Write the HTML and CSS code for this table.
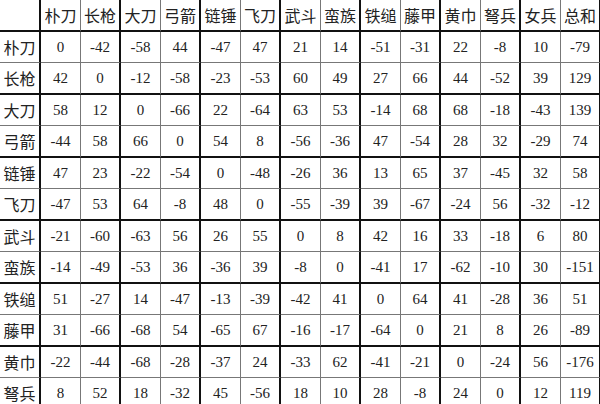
FILE: index.html
```html
<!DOCTYPE html>
<html lang="zh">
<head>
<meta charset="utf-8">
<title>兵种对战表</title>
<link rel="stylesheet" href="styles.css">
</head>
<body>
<div class="sheet">
  <div class="row"><div class="cell"></div><div class="cell">朴刀</div><div class="cell">长枪</div><div class="cell">大刀</div><div class="cell">弓箭</div><div class="cell">链锤</div><div class="cell">飞刀</div><div class="cell">武斗</div><div class="cell">蛮族</div><div class="cell">铁缒</div><div class="cell">藤甲</div><div class="cell">黄巾</div><div class="cell">弩兵</div><div class="cell">女兵</div><div class="cell">总和</div></div>
  <div class="row"><div class="cell">朴刀</div><div class="cell num">0</div><div class="cell num">-42</div><div class="cell num">-58</div><div class="cell num">44</div><div class="cell num">-47</div><div class="cell num">47</div><div class="cell num">21</div><div class="cell num">14</div><div class="cell num">-51</div><div class="cell num">-31</div><div class="cell num">22</div><div class="cell num">-8</div><div class="cell num">10</div><div class="cell num">-79</div></div>
  <div class="row"><div class="cell">长枪</div><div class="cell num">42</div><div class="cell num">0</div><div class="cell num">-12</div><div class="cell num">-58</div><div class="cell num">-23</div><div class="cell num">-53</div><div class="cell num">60</div><div class="cell num">49</div><div class="cell num">27</div><div class="cell num">66</div><div class="cell num">44</div><div class="cell num">-52</div><div class="cell num">39</div><div class="cell num">129</div></div>
  <div class="row"><div class="cell">大刀</div><div class="cell num">58</div><div class="cell num">12</div><div class="cell num">0</div><div class="cell num">-66</div><div class="cell num">22</div><div class="cell num">-64</div><div class="cell num">63</div><div class="cell num">53</div><div class="cell num">-14</div><div class="cell num">68</div><div class="cell num">68</div><div class="cell num">-18</div><div class="cell num">-43</div><div class="cell num">139</div></div>
  <div class="row"><div class="cell">弓箭</div><div class="cell num">-44</div><div class="cell num">58</div><div class="cell num">66</div><div class="cell num">0</div><div class="cell num">54</div><div class="cell num">8</div><div class="cell num">-56</div><div class="cell num">-36</div><div class="cell num">47</div><div class="cell num">-54</div><div class="cell num">28</div><div class="cell num">32</div><div class="cell num">-29</div><div class="cell num">74</div></div>
  <div class="row"><div class="cell">链锤</div><div class="cell num">47</div><div class="cell num">23</div><div class="cell num">-22</div><div class="cell num">-54</div><div class="cell num">0</div><div class="cell num">-48</div><div class="cell num">-26</div><div class="cell num">36</div><div class="cell num">13</div><div class="cell num">65</div><div class="cell num">37</div><div class="cell num">-45</div><div class="cell num">32</div><div class="cell num">58</div></div>
  <div class="row"><div class="cell">飞刀</div><div class="cell num">-47</div><div class="cell num">53</div><div class="cell num">64</div><div class="cell num">-8</div><div class="cell num">48</div><div class="cell num">0</div><div class="cell num">-55</div><div class="cell num">-39</div><div class="cell num">39</div><div class="cell num">-67</div><div class="cell num">-24</div><div class="cell num">56</div><div class="cell num">-32</div><div class="cell num">-12</div></div>
  <div class="row"><div class="cell">武斗</div><div class="cell num">-21</div><div class="cell num">-60</div><div class="cell num">-63</div><div class="cell num">56</div><div class="cell num">26</div><div class="cell num">55</div><div class="cell num">0</div><div class="cell num">8</div><div class="cell num">42</div><div class="cell num">16</div><div class="cell num">33</div><div class="cell num">-18</div><div class="cell num">6</div><div class="cell num">80</div></div>
  <div class="row"><div class="cell">蛮族</div><div class="cell num">-14</div><div class="cell num">-49</div><div class="cell num">-53</div><div class="cell num">36</div><div class="cell num">-36</div><div class="cell num">39</div><div class="cell num">-8</div><div class="cell num">0</div><div class="cell num">-41</div><div class="cell num">17</div><div class="cell num">-62</div><div class="cell num">-10</div><div class="cell num">30</div><div class="cell num">-151</div></div>
  <div class="row"><div class="cell">铁缒</div><div class="cell num">51</div><div class="cell num">-27</div><div class="cell num">14</div><div class="cell num">-47</div><div class="cell num">-13</div><div class="cell num">-39</div><div class="cell num">-42</div><div class="cell num">41</div><div class="cell num">0</div><div class="cell num">64</div><div class="cell num">41</div><div class="cell num">-28</div><div class="cell num">36</div><div class="cell num">51</div></div>
  <div class="row"><div class="cell">藤甲</div><div class="cell num">31</div><div class="cell num">-66</div><div class="cell num">-68</div><div class="cell num">54</div><div class="cell num">-65</div><div class="cell num">67</div><div class="cell num">-16</div><div class="cell num">-17</div><div class="cell num">-64</div><div class="cell num">0</div><div class="cell num">21</div><div class="cell num">8</div><div class="cell num">26</div><div class="cell num">-89</div></div>
  <div class="row"><div class="cell">黄巾</div><div class="cell num">-22</div><div class="cell num">-44</div><div class="cell num">-68</div><div class="cell num">-28</div><div class="cell num">-37</div><div class="cell num">24</div><div class="cell num">-33</div><div class="cell num">62</div><div class="cell num">-41</div><div class="cell num">-21</div><div class="cell num">0</div><div class="cell num">-24</div><div class="cell num">56</div><div class="cell num">-176</div></div>
  <div class="row"><div class="cell">弩兵</div><div class="cell num">8</div><div class="cell num">52</div><div class="cell num">18</div><div class="cell num">-32</div><div class="cell num">45</div><div class="cell num">-56</div><div class="cell num">18</div><div class="cell num">10</div><div class="cell num">28</div><div class="cell num">-8</div><div class="cell num">24</div><div class="cell num">0</div><div class="cell num">12</div><div class="cell num">119</div></div>
</div>
</body>
</html>
```

FILE: styles.css
```css
html, body {
  margin: 0;
  padding: 0;
  overflow: hidden;
  background: #fff;
}

.sheet {
  display: flex;
  flex-direction: column;
  width: 601px;
  font-family: "Noto Sans CJK SC", sans-serif;
  font-size: 16px;
  color: #222;
}

.row {
  display: grid;
  grid-template-columns: 41px repeat(14, 40px);
  height: 31px;
}

.row:nth-child(odd) {
  height: 32px;
}

.cell {
  box-sizing: border-box;
  display: flex;
  align-items: center;
  justify-content: center;
  white-space: nowrap;
  border-right: 1px solid #777;
  border-bottom: 1px solid #777;
  line-height: 1;
}

.cell:nth-child(odd) {
  border-right: 2px solid #111;
}

.row:nth-child(odd) .cell {
  border-bottom: 2px solid #111;
}

.num {
  font-family: "Liberation Serif", "Times New Roman", serif;
  font-size: 15px;
  padding-top: 1px;
}
```
